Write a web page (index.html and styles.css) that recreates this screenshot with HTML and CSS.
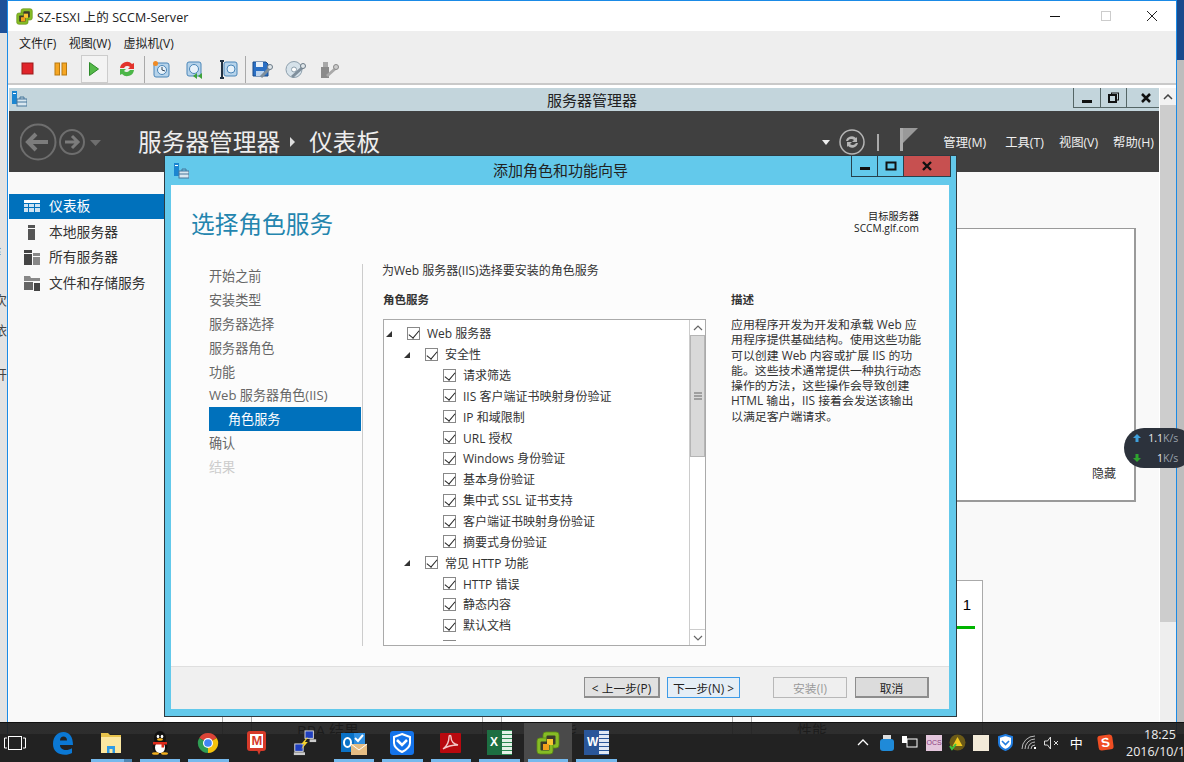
FILE: index.html
```html
<!DOCTYPE html>
<html lang="zh-CN">
<head>
<meta charset="utf-8">
<title>SZ-ESXI 上的 SCCM-Server</title>
<link rel="stylesheet" href="styles.css">
</head>
<body>
<svg class="defs" width="0" height="0">
  <symbol id="vs" viewBox="0 0 24 24">
    <rect x="7" y="1" width="16" height="16" rx="3" fill="#86bc25" stroke="#5c8a12" stroke-width=".8"/>
    <rect x="1" y="7" width="16" height="16" rx="3" fill="#86bc25" stroke="#5c8a12" stroke-width=".8"/>
    <rect x="10.500" y="4.500" width="9" height="9" rx="1" fill="#3b3b2a"/>
    <rect x="4.500" y="10.500" width="9" height="9" rx="1" fill="#3b3b2a"/>
    <rect x="11" y="8" width="6" height="6" fill="#f9c733"/><rect x="7" y="13" width="6" height="6" fill="#f2a01b"/>
  </symbol>
  <symbol id="sm" viewBox="0 0 16 16">
    <rect x="1" y="0" width="5" height="13" fill="#1c86d1"/><rect x="2" y="2" width="3" height="1" fill="#fff"/>
    <rect x="6" y="8" width="10" height="7" fill="#d9e7f0" stroke="#47769b"/><path d="M9 8V6h4v2" fill="none" stroke="#47769b"/><path d="M6 11h10" stroke="#47769b"/>
  </symbol>
</svg>
<div class="desktop">
  <div class="strip strip-left"><span class="blue"></span><span class="frag f1">纟</span><span class="frag f2">次</span><span class="frag f3">依</span><span class="frag">开</span></div>
  <div class="strip strip-right"><span class="blue"></span></div>

  <div class="vm">
    <div class="vm-title">
      <svg class="vm-logo" width="17" height="17"><use href="#vs"/></svg>
      <span class="vm-name">SZ-ESXI 上的 SCCM-Server</span>
      <div class="win-ctrl">
        <svg width="46" height="30" viewBox="0 0 46 30"><path d="M13 15.500h10" stroke="#111" stroke-width="1"/></svg>
        <svg width="46" height="30" viewBox="0 0 46 30"><rect x="18.500" y="10.500" width="9" height="9" fill="none" stroke="#ccc"/></svg>
        <svg width="46" height="30" viewBox="0 0 46 30"><path d="M18 10l10 10M28 10L18 20" stroke="#222" stroke-width="1"/></svg>
      </div>
    </div>
    <div class="vm-bar">
      <div class="vm-menu"><span>文件(F)</span><span>视图(W)</span><span>虚拟机(V)</span></div>
      <div class="toolbar">
        <div class="tool"><svg width="14" height="14"><rect x="1" y="1" width="11" height="11" fill="#e0242a" stroke="#9c1a1a"/></svg></div>
        <div class="tool"><svg width="14" height="14"><rect x="1" y="1" width="4.500" height="12" fill="#f6a623" stroke="#b97a10"/><rect x="8" y="1" width="4.500" height="12" fill="#f6a623" stroke="#b97a10"/></svg></div>
        <div class="tool tool-on"><svg width="12" height="16"><path d="M1.500 1.500L10.500 8l-9 6.500z" fill="#54b948" stroke="#2d8a2a"/></svg></div>
        <div class="tool"><svg width="18" height="18" viewBox="0 0 18 18"><path d="M2 8a7 7 0 0 1 12-4l2-1v6h-6l2-2a4 4 0 0 0-6 1z" fill="#e2332c"/><path d="M16 10a7 7 0 0 1-12 4l-2 1V9h6l-2 2a4 4 0 0 0 6-1z" fill="#4bb648"/></svg></div>
        <span class="tool-sep"></span>
        <div class="tool"><svg width="19" height="19" viewBox="0 0 19 19"><rect x="2" y="3" width="15" height="14" rx="2" fill="#b6d3ea" stroke="#4a86b8"/><circle cx="10" cy="10" r="4.500" fill="#e8f2fa" stroke="#4a86b8"/><path d="M10 7v3l3 1" fill="none" stroke="#345"/><circle cx="3.500" cy="3.500" r="2.500" fill="#f08a24"/></svg></div>
        <div class="tool"><svg width="19" height="19" viewBox="0 0 19 19"><rect x="2" y="2" width="14" height="14" rx="2" fill="#b6d3ea" stroke="#4a86b8"/><circle cx="9" cy="9" r="4.500" fill="#e8f2fa" stroke="#4a86b8"/><path d="M12 13l-4 3 4 3zM17 13l-4 3 4 3z" fill="#3ea33a"/></svg></div>
        <div class="tool"><svg width="19" height="19" viewBox="0 0 19 19"><rect x="5" y="2" width="13" height="14" rx="2" fill="#b6d3ea" stroke="#4a86b8"/><circle cx="12" cy="9" r="4" fill="#e8f2fa" stroke="#4a86b8"/><path d="M3 1v5M3 13v5M1 1h4M1 18h4M3 6v7" stroke="#234" stroke-width="2" fill="none"/></svg></div>
        <span class="tool-sep"></span>
        <div class="tool"><svg width="21" height="19" viewBox="0 0 21 19"><path d="M1 2h13l2 2v12H1z" fill="#2a6fc4" stroke="#174a8a"/><rect x="4" y="2" width="7" height="5" fill="#e8f0f8"/><rect x="4" y="11" width="8" height="5" fill="#bcd4ee"/><path d="M9 17l9-9" stroke="#7f8f9c" stroke-width="3"/><circle cx="18" cy="7" r="2.500" fill="#dfe6ea" stroke="#6c7a86"/></svg></div>
        <div class="tool"><svg width="21" height="19" viewBox="0 0 21 19"><circle cx="9" cy="9.500" r="8" fill="#d6e2ea" stroke="#8ea0ad"/><circle cx="9" cy="9.500" r="2.500" fill="#fff" stroke="#8ea0ad"/><path d="M7 17l11-10" stroke="#7f8f9c" stroke-width="3"/><circle cx="18" cy="6" r="2.500" fill="#dfe6ea" stroke="#6c7a86"/></svg></div>
        <div class="tool"><svg width="21" height="19" viewBox="0 0 21 19"><rect x="2" y="7" width="8" height="11" fill="#8a8a8a"/><rect x="4" y="2" width="5" height="5" fill="#a8a8a8"/><path d="M8 16l9-8" stroke="#a9a9a9" stroke-width="3"/><circle cx="17" cy="7" r="2.500" fill="#ccc" stroke="#888"/></svg></div>
      </div>
    </div>
    <div class="vm-screen">
      <div class="sm">
        <div class="sm-title">
          <svg class="sm-icon" width="16" height="16"><use href="#sm"/></svg>
          <span class="sm-name">服务器管理器</span>
          <div class="sm-ctrl">
            <span class="sm-btn sm-min"><svg width="12" height="12"><rect x="1" y="8" width="10" height="3" fill="#111"/></svg></span>
            <span class="sm-btn sm-res"><svg width="12" height="12"><rect x="3.500" y="1" width="7" height="7" fill="none" stroke="#111"/><rect x="1" y="3" width="7" height="7" fill="#c3d5dc" stroke="#111" stroke-width="2"/></svg></span>
            <span class="sm-btn sm-cls"><svg width="12" height="12"><path d="M2 2l8 8M10 2l-8 8" stroke="#111" stroke-width="2.500"/></svg></span>
          </div>
        </div>
        <div class="sm-head">
          <svg class="nav-arrows" width="90" height="40" viewBox="0 0 90 40">
            <circle cx="18" cy="20" r="17.500" fill="none" stroke="#6e6e6e" stroke-width="2"/>
            <path d="M8 20h20M16 12l-8 8 8 8" fill="none" stroke="#7c7c7c" stroke-width="4"/>
            <circle cx="52" cy="20" r="12" fill="none" stroke="#6e6e6e" stroke-width="2"/>
            <path d="M45 20h13M52 14l6 6-6 6" fill="none" stroke="#7c7c7c" stroke-width="3"/>
            <path d="M70 18h11l-5.500 6z" fill="#6e6e6e"/>
          </svg>
          <span class="crumb">服务器管理器</span>
          <svg class="crumb-sep" width="8" height="10"><path d="M1 0l5 5-5 5z" fill="#ddd"/></svg>
          <span class="crumb">仪表板</span>
          <div class="head-right">
            <svg width="8" height="5"><path d="M0 0h8L4 5z" fill="#eee"/></svg>
            <svg class="refresh" width="26" height="26" viewBox="0 0 26 26"><circle cx="13" cy="13" r="12" fill="none" stroke="#b5b5b5" stroke-width="1.500"/><path d="M7 12a6 6 0 0 1 10-3l1-1v5h-5l2-2a4 4 0 0 0-6 1zM19 14a6 6 0 0 1-10 3l-1 1v-5h5l-2 2a4 4 0 0 0 6-1z" fill="#b5b5b5"/></svg>
            <span class="head-sep"></span>
            <svg class="flag" width="18" height="24" viewBox="0 0 18 24"><rect x="0" y="1" width="3" height="23" fill="#aaa"/><path d="M3 1h15L3 16z" fill="#999"/></svg>
            <span class="head-menu">管理(M)</span><span class="head-menu h2">工具(T)</span><span class="head-menu h3">视图(V)</span><span class="head-menu h4">帮助(H)</span>
          </div>
        </div>
        <div class="sm-body">
          <div class="sm-nav">
            <div class="nav-item nav-on"><svg width="16" height="13" viewBox="0 0 16 13"><rect width="16" height="3" fill="#fff"/><path d="M0 4h4v3H0zM5 4h5v3H5zM11 4h5v3h-5zM0 8h4v4H0zM5 8h5v4H5zM11 8h5v4h-5z" fill="#cfe3f2"/></svg><span class="nav-text">仪表板</span></div>
            <div class="nav-item"><svg width="16" height="15" viewBox="0 0 16 15"><rect x="4" y="0" width="7" height="3" fill="#555"/><rect x="4" y="4" width="7" height="11" fill="#555"/></svg><span class="nav-text">本地服务器</span></div>
            <div class="nav-item"><svg width="16" height="15" viewBox="0 0 16 15"><rect x="0" y="0" width="8" height="3" fill="#444"/><rect x="0" y="4" width="8" height="11" fill="#444"/><rect x="9" y="3" width="7" height="3" fill="#888"/><rect x="9" y="7" width="7" height="8" fill="#888"/></svg><span class="nav-text">所有服务器</span></div>
            <div class="nav-item"><svg width="16" height="15" viewBox="0 0 16 15"><path d="M0 0h6l1 2h9v3H0z" fill="#888"/><rect x="0" y="6" width="9" height="8" fill="#666"/><path d="M10 7h6v8h-6z" fill="#444"/></svg><span class="nav-text">文件和存储服务</span></div>
          </div>
          <div class="sm-main">
            <div class="box"><span class="hide-link">隐藏</span></div>
            <div class="cards">
              <div class="card card-first"></div>
              <div class="card"><span class="card-label">BPA 结果</span></div>
              <div class="card"><span class="card-label">性能</span></div>
              <div class="card"><span class="card-num">1</span><span class="card-bar"></span><span class="card-label">性能</span></div>
            </div>
          </div>
        </div>
      </div>
      <div class="sm-scroll"><span class="sc-up"><svg width="10" height="6"><path d="M1 5l4-4 4 4" fill="none" stroke="#444" stroke-width="1.500"/></svg></span><span class="sc-thumb"></span></div>
    </div>
  </div>

  <div class="dialog">
    <div class="dlg-title">
      <svg width="16" height="16"><use href="#sm"/></svg>
      <span class="dlg-name">添加角色和功能向导</span>
      <div class="dlg-ctrl">
        <span class="dlg-btn dlg-min"><svg width="12" height="10"><rect x="1" y="6" width="10" height="3" fill="#111"/></svg></span>
        <span class="dlg-btn dlg-max"><svg width="12" height="10"><rect x="1.500" y="1.500" width="9" height="7" fill="none" stroke="#111" stroke-width="2"/></svg></span>
        <span class="dlg-btn dlg-cls"><svg width="12" height="10"><path d="M2 1l8 8M10 1L2 9" stroke="#111" stroke-width="2.400"/></svg></span>
      </div>
    </div>
    <div class="dlg-body">
      <div class="dlg-head">
        <h1>选择角色服务</h1>
        <div class="target"><span>目标服务器</span><span>SCCM.glf.com</span></div>
      </div>
      <div class="dlg-content">
        <div class="steps">
          <div class="step">开始之前</div>
          <div class="step">安装类型</div>
          <div class="step">服务器选择</div>
          <div class="step">服务器角色</div>
          <div class="step">功能</div>
          <div class="step">Web 服务器角色(IIS)</div>
          <div class="step step-on">角色服务</div>
          <div class="step">确认</div>
          <div class="step step-off">结果</div>
        </div>
        <div class="dlg-main">
          <p class="intro">为Web 服务器(IIS)选择要安装的角色服务</p>
          <div class="panes">
            <div class="pane-left">
              <div class="pane-label">角色服务</div>
              <div class="tree">
                <div class="tree-rows">
                  <div class="row d0"><i class="tw"></i><b class="cb"></b>Web 服务器</div>
                  <div class="row d1"><i class="tw"></i><b class="cb"></b>安全性</div>
                  <div class="row d2"><b class="cb"></b>请求筛选</div>
                  <div class="row d2"><b class="cb"></b>IIS 客户端证书映射身份验证</div>
                  <div class="row d2"><b class="cb"></b>IP 和域限制</div>
                  <div class="row d2"><b class="cb"></b>URL 授权</div>
                  <div class="row d2"><b class="cb"></b>Windows 身份验证</div>
                  <div class="row d2"><b class="cb"></b>基本身份验证</div>
                  <div class="row d2"><b class="cb"></b>集中式 SSL 证书支持</div>
                  <div class="row d2"><b class="cb"></b>客户端证书映射身份验证</div>
                  <div class="row d2"><b class="cb"></b>摘要式身份验证</div>
                  <div class="row d1"><i class="tw"></i><b class="cb"></b>常见 HTTP 功能</div>
                  <div class="row d2"><b class="cb"></b>HTTP 错误</div>
                  <div class="row d2"><b class="cb"></b>静态内容</div>
                  <div class="row d2"><b class="cb"></b>默认文档</div>
                  <div class="row d2"><b class="cb"></b></div>
                </div>
                <div class="tree-scroll">
                  <span class="ts-btn"><svg width="10" height="6"><path d="M1 5l4-4 4 4" fill="none" stroke="#666" stroke-width="1.200"/></svg></span>
                  <span class="ts-thumb"><svg width="8" height="8"><path d="M0 1h8M0 4h8M0 7h8" stroke="#666" stroke-width="1.200"/></svg></span>
                  <span class="ts-track"></span>
                  <span class="ts-btn ts-down"><svg width="10" height="6"><path d="M1 1l4 4 4-4" fill="none" stroke="#666" stroke-width="1.200"/></svg></span>
                </div>
              </div>
            </div>
            <div class="pane-right">
              <div class="pane-label">描述</div>
              <p class="desc">应用程序开发为开发和承载 Web 应<br>用程序提供基础结构。使用这些功能<br>可以创建 Web 内容或扩展 IIS 的功<br>能。这些技术通常提供一种执行动态<br>操作的方法，这些操作会导致创建<br>HTML 输出，IIS 接着会发送该输出<br>以满足客户端请求。</p>
            </div>
          </div>
        </div>
      </div>
      <div class="dlg-foot">
        <button class="btn b-prev">&lt; 上一步(P)</button>
        <button class="btn b-next">下一步(N) &gt;</button>
        <button class="btn b-dis">安装(I)</button>
        <button class="btn b-cancel">取消</button>
      </div>
    </div>
  </div>

  <div class="netspeed">
    <div class="net-row"><svg width="8" height="8"><path d="M4 0l4 4H5.500v4h-3V4H0z" fill="#3fa0dc"/></svg><span class="val">1.1</span><span class="unit">K/s</span></div>
    <div class="net-row"><svg width="8" height="8"><path d="M4 8l4-4H5.500V0h-3v4H0z" fill="#2ea52e"/></svg><span class="val">1</span><span class="unit">K/s</span></div>
  </div>

  <div class="taskbar">
    <div class="tv"><svg width="22" height="16" viewBox="0 0 22 16"><rect x="4.500" y="1.500" width="13" height="13" fill="none" stroke="#fff"/><path d="M3 3H.5v10H3M19 3h2.500v10H19" fill="none" stroke="#fff"/></svg></div>
    <div class="ti"><svg width="22" height="24" viewBox="0 0 22 24"><path d="M1 13C1 5 6 1 11.500 1 17.500 1 21 6 21 14H8c0 3.500 3 5 6 5 2 0 4-.6 6-1.800V22c-2 1.200-4.500 1.800-7 1.800C6 23.800 1 20 1 13zM8 9.500h7c0-2.500-1.500-4-3.500-4S8 7 8 9.500z" fill="#0b78d4"/></svg></div>
    <div class="ti open open-stack"><svg width="22" height="20" viewBox="0 0 22 20"><path d="M1 0h7l2 2h11v18H1z" fill="#e8c34c"/><path d="M1 4h20v16H1z" fill="#fbe7a1"/><path d="M7 20v-7h8v7h-2.500v-4h-3v4z" fill="#2f9be6"/></svg></div>
    <div class="ti open"><svg width="20" height="24" viewBox="0 0 20 24"><ellipse cx="10" cy="7.500" rx="6" ry="7.500" fill="#111"/><ellipse cx="10" cy="16" rx="7.500" ry="6.500" fill="#111"/><ellipse cx="10" cy="16.500" rx="5" ry="5.500" fill="#fff"/><ellipse cx="8" cy="5.500" rx="1.300" ry="1.800" fill="#fff"/><ellipse cx="12" cy="5.500" rx="1.300" ry="1.800" fill="#fff"/><ellipse cx="10" cy="8.500" rx="3" ry="1.200" fill="#f2b01e"/><path d="M3 11h14v2.500h-3v3h-2.500v-3H3z" fill="#dd2a1b"/><ellipse cx="5.500" cy="22.500" rx="3.500" ry="1.300" fill="#f2b01e"/><ellipse cx="14.500" cy="22.500" rx="3.500" ry="1.300" fill="#f2b01e"/></svg></div>
    <div class="ti open"><svg width="22" height="22" viewBox="0 0 24 24"><path d="M12 12L2.470 6.500A11 11 0 0 1 21.530 6.500z" fill="#db4437"/><path d="M12 12l9.530-5.500A11 11 0 0 1 12 23z" fill="#f4c20d"/><path d="M12 12v11A11 11 0 0 1 2.470 6.500z" fill="#2f9e54"/><circle cx="12" cy="12" r="5.500" fill="#fff"/><circle cx="12" cy="12" r="4.200" fill="#4285f4"/></svg></div>
    <div class="ti"><span class="ti-m">M</span></div>
    <div class="ti"><svg width="24" height="26" viewBox="0 0 24 28"><rect x="12" y="1" width="9" height="8" fill="#1f3fbf" stroke="#ddd"/><rect x="17" y="10" width="7" height="3" fill="#ccc"/><rect x="1" y="15" width="9" height="8" fill="#1f3fbf" stroke="#ddd"/><rect x="0" y="24" width="12" height="3" fill="#ccc"/><path d="M14 8l-6 7h3l-3 6 7-8h-3l3-5z" fill="#f6d32d"/></svg></div>
    <div class="ti open"><svg width="26" height="26" viewBox="0 0 26 26"><rect x="10" y="3" width="14" height="11" fill="#2f8fe0"/><path d="M14 8l3 3 5-6" fill="none" stroke="#fff" stroke-width="2"/><rect x="0" y="3" width="13" height="19" fill="#0a72c6"/><ellipse cx="6.500" cy="12.500" rx="3.500" ry="4.500" fill="none" stroke="#fff" stroke-width="2"/><rect x="10" y="14" width="16" height="11" fill="#e6bd83"/><path d="M10 14l8 6 8-6" fill="none" stroke="#fff"/></svg></div>
    <div class="ti open"><svg width="24" height="24" viewBox="0 0 24 24"><rect width="24" height="24" rx="3" fill="#1473ea"/><path d="M12 3l8 3v6c0 4-4 7-8 9-4-2-8-5-8-9V6z" fill="none" stroke="#fff" stroke-width="2"/><path d="M7 9l5 5 5-5" fill="none" stroke="#fff" stroke-width="2.500"/></svg></div>
    <div class="ti open"><svg width="21" height="20" viewBox="0 0 21 20"><rect width="21" height="20" rx="1" fill="#b8090f"/><path d="M3 16c4-3 6-7 6-12 0-2 2-2 2 0 0 5 3 7 7 8-4 0-9 0-15 4z" fill="none" stroke="#f3c6c6" stroke-width="1.400"/></svg></div>
    <div class="ti open"><span class="ti-doc ti-xl">X</span></div>
    <div class="ti open ti-active"><svg width="24" height="24"><use href="#vs"/></svg></div>
    <div class="ti open"><span class="ti-doc ti-wd">W</span></div>
    <div class="tray">
      <span class="tr"><svg width="12" height="7"><path d="M1 6l5-5 5 5" fill="none" stroke="#fff" stroke-width="1.300"/></svg></span>
      <span class="tr"><svg width="14" height="16" viewBox="0 0 14 16"><rect x="3" y="0" width="8" height="5" fill="#ddd"/><rect x="0" y="4" width="14" height="12" rx="3" fill="#1f8ad8"/></svg></span>
      <span class="tr"><svg width="16" height="13" viewBox="0 0 16 13"><rect x="5" y="3" width="10" height="8" fill="none" stroke="#fff"/><rect x="0" y="0" width="5" height="7" fill="#fff"/></svg></span>
      <span class="tr"><span class="tr-pink">OCS</span></span>
      <span class="tr"><svg width="17" height="17" viewBox="0 0 17 17"><circle cx="8.500" cy="8.500" r="8" fill="#6b5a17"/><path d="M8.500 3l5 9h-10z" fill="#f2c81e"/><path d="M1 12l2 3 4-5" fill="none" stroke="#3fc23f" stroke-width="2"/></svg></span>
      <span class="tr"><span class="tr-white"></span></span>
      <span class="tr"><svg width="15" height="17" viewBox="0 0 15 17"><path d="M7.500 1l6.500 2v6c0 3-3 6-6.500 7C4 15 1 12 1 9V3z" fill="#fff" stroke="#1f7ce0" stroke-width="2"/><path d="M4 7l3.500 3.500L11 7" fill="none" stroke="#1f7ce0" stroke-width="1.600"/></svg></span>
      <span class="tr"><svg width="16" height="15" viewBox="0 0 16 15"><path d="M1 14a13 13 0 0 1 13-13M4 14a10 10 0 0 1 10-10M7 14a7 7 0 0 1 7-7M10 14a4 4 0 0 1 4-4" fill="none" stroke="#bbb"/><rect x="13" y="12" width="2" height="2" fill="#fff"/></svg></span>
      <span class="tr"><svg width="16" height="14" viewBox="0 0 16 14"><path d="M.5 5h3l3-4v12l-3-4h-3z" fill="none" stroke="#ddd"/><path d="M10 5l4 4M14 5l-4 4" stroke="#ddd"/></svg></span>
      <span class="tr tr-ime">中</span>
      <span class="tr tr-wide"><span class="tr-sogou">S</span></span>
    </div>
    <div class="clock"><span class="time">18:25</span><span class="date">2016/10/19</span></div>
  </div>
</div>
</body>
</html>
```
FILE: styles.css
```css
* { box-sizing: border-box; }
html, body { margin: 0; padding: 0; }
body { width: 1184px; height: 762px; overflow: hidden; font-family: "Open Sans", "Noto Sans CJK SC", sans-serif; font-size: 12px; color: #333; }
.defs { position: absolute; }
svg { display: block; flex: none; }
.desktop { position: relative; width: 1184px; height: 762px; overflow: hidden; background: #e6e6e6; }

.strip { position: absolute; top: 0; width: 7px; height: 722px; overflow: hidden; display: flex; flex-direction: column; background: #e3e3e3; }
.strip-left { left: 0; }
.strip-right { left: 1177px; background: #bdbdbd; }
.strip .blue { display: block; flex: none; height: 33px; background: #1e5199; margin-bottom: 210px; }
.strip-right .blue { height: 60px; background: #1b4a8c; }
.frag { display: block; flex: none; width: 14px; height: 14px; margin-left: -6px; font-size: 13px; line-height: 14px; color: #444; }
.f1 { margin-bottom: 36px; }
.f2 { margin-bottom: 16px; }
.f3 { margin-bottom: 30px; }

.vm { position: absolute; left: 7px; top: 0; width: 1170px; height: 762px; background: #fff; border: solid #1a8ae6; border-width: 1px 1px 0 1px; display: flex; flex-direction: column; }
.vm-title { height: 30px; flex: none; display: flex; align-items: center; padding-left: 8px; background: #fff; }
.vm-logo { margin-right: 4px; }
.vm-name { font-size: 12.500px; color: #222; letter-spacing: .1px; }
.win-ctrl { margin-left: auto; display: flex; margin-right: 1px; }
.vm-bar { height: 54px; flex: none; background: #eee; border-bottom: 2px solid #c9c9c9; display: flex; flex-direction: column; }
.vm-menu { height: 24px; flex: none; display: flex; align-items: flex-end; padding: 0 0 2px 11px; color: #222; font-size: 12px; }
.vm-menu span { margin-right: 12.500px; line-height: 18px; }
.toolbar { display: flex; align-items: center; height: 28px; padding-left: 3px; }
.tool { width: 33.300px; height: 28px; display: flex; align-items: center; justify-content: center; }
.tool-on { background: #f3f3f3; box-shadow: inset 0 0 0 1px #ccc; width: 27px; margin: 0 3px; }
.tool-sep { width: 1px; height: 27px; background: #a9a9a9; }

.vm-screen { flex: 1; min-height: 0; margin-top: 3px; padding-left: 1px; display: flex; background: #fff; }
.sm { width: 1150px; margin-right: 1px; display: flex; flex-direction: column; }
.sm-title { position: relative; height: 23px; flex: none; background: #c3d5dc; display: flex; align-items: center; justify-content: center; }
.sm-icon { position: absolute; left: 2px; top: 3px; }
.sm-name { font-size: 15px; color: #222; margin-left: 16px; }
.sm-ctrl { position: absolute; right: 0; top: 0; display: flex; height: 20px; }
.sm-btn { display: flex; align-items: center; justify-content: center; height: 20px; border: solid #566; border-width: 0 1px 1px 1px; }
.sm-min { width: 28px; }
.sm-res { width: 26px; border-left: 0; }
.sm-cls { width: 32px; border-left: 0; border-right: 0; padding-left: 6px; }
.sm-head { height: 61px; flex: none; background: #404040; display: flex; align-items: center; padding-left: 11px; padding-bottom: 1px; color: #eee; }
.nav-arrows { margin-right: 28px; margin-top: 2px; }
.crumb { font-size: 23.700px; line-height: 28px; margin-top: 2px; }
.crumb-sep { margin: 2px 12px 0 9px; }
.head-right { margin-left: auto; display: flex; align-items: center; padding-top: 2px; }
.refresh { margin: 0 12px 0 9px; }
.head-sep { width: 2px; height: 17px; background: #aaa; margin-right: 21px; }
.flag { margin-right: 25px; margin-top: -6px; }
.head-menu { font-size: 12.300px; color: #f0f0f0; white-space: nowrap; }
.h2 { margin-left: 19px; }
.h3 { margin-left: 15px; }
.h4 { margin-left: 15px; margin-right: 5px; }
.sm-body { flex: 1; min-height: 0; display: flex; background: #f9f9f9; }
.sm-nav { width: 155px; flex: none; padding-top: 22px; }
.nav-item { height: 25.600px; display: flex; align-items: center; gap: 9px; padding-left: 15px; font-size: 13.800px; color: #333; }
.nav-text { margin-top: -3px; }
.nav-on { background: #0071bc; color: #fff; height: 25px; margin-bottom: .4px; }
.sm-main { flex: 1; min-width: 0; overflow: hidden; padding-top: 56px; display: flex; flex-direction: column; }
.box { flex: none; height: 274px; margin: 0 23px 0 40px; background: #fff; border: 2px solid #9a9a9a; border-width: 1px 2px 2px 1px; position: relative; display: flex; align-items: flex-end; justify-content: flex-end; padding: 0 18px 18px 0; }
.hide-link { font-size: 12px; color: #333; }
.cards { flex: none; height: 154px; margin-top: 78px; padding-right: 176px; display: flex; justify-content: flex-end; gap: 18px; }
.card { flex: none; width: 232px; background: #fff; border: solid #aaa; border-width: 1px 1px 0 1px; display: flex; flex-direction: column; padding-left: 45px; font-size: 15px; color: #000; }
.card-first { margin-right: 10px; }
.card-num { align-self: flex-end; margin: 14px 11px 0 0; line-height: 20px; font-size: 15px; font-family: "Liberation Sans", sans-serif; }
.card-bar { display: block; height: 3px; background: #00b400; margin: 11px 7px 0 -45px; }
.card-label { margin-top: auto; margin-bottom: -6px; line-height: 20px; white-space: nowrap; }
.sm-scroll { width: 16px; flex: none; display: flex; flex-direction: column; background: #eee; }
.sc-up { height: 17px; display: flex; align-items: center; justify-content: center; background: #f2f2f2; }
.sc-thumb { height: 517px; background: #cdcdcd; }

.dialog { position: absolute; left: 164px; top: 155px; width: 793px; height: 562px; background: #63c9eb; border: 1px solid #2e3a40; display: flex; flex-direction: column; }
.dlg-title { position: relative; height: 29px; flex: none; padding-left: 8px; display: flex; align-items: center; }
.dlg-name { position: absolute; left: 0; right: 0; text-align: center; font-size: 15px; color: #222; top: 4px; line-height: 20px; }
.dlg-ctrl { position: absolute; right: 5px; top: 0; display: flex; height: 21px; border: solid #26414d; border-width: 0 1px 1px 1px; }
.dlg-btn { height: 20px; display: flex; align-items: center; justify-content: center; }
.dlg-min { width: 26px; border-right: 1px solid #26414d; }
.dlg-max { width: 26px; border-right: 1px solid #26414d; }
.dlg-cls { width: 46px; background: #c75050; }
.dlg-body { flex: 1; min-height: 0; margin: 0 7px 7px 6px; background: #fcfcfc; display: flex; flex-direction: column; }
.dlg-head { height: 79px; flex: none; display: flex; justify-content: space-between; padding: 23px 30px 0 20px; }
.dlg-head h1 { margin: 0; font-size: 23.700px; font-weight: 400; line-height: 32px; color: #2485ae; }
.target { display: flex; flex-direction: column; align-items: flex-end; font-size: 10.200px; line-height: 12px; padding-top: 2px; color: #222; }
.dlg-content { flex: 1; min-height: 0; display: flex; }
.steps { width: 192px; flex: none; padding-left: 38px; border-right: 1px solid #ccc; height: 382px; }
.step { height: 23.900px; line-height: 25.900px; font-size: 13.100px; color: #666; white-space: nowrap; }
.step-on { background: #0071bc; color: #fff; padding-left: 19px; margin-right: 1px; }
.step-off { color: #ccc; }
.dlg-main { flex: 1; min-width: 0; padding-left: 20px; }
.intro { margin: 0 0 0 -1px; line-height: 13px; font-size: 12px; color: #333; white-space: nowrap; }
.panes { display: flex; gap: 25px; }
.pane-left { width: 323px; flex: none; }
.pane-right { width: 195px; flex: none; }
.pane-label { margin-top: 16px; font-weight: 700; line-height: 14px; font-size: 11.500px; color: #333; }
.tree { margin-top: 12px; height: 327px; border: 1px solid #aaa; background: #fff; display: flex; overflow: hidden; align-items: flex-start; }
.tree-rows { flex: 1; min-width: 0; height: 321px; padding-top: 3px; overflow: hidden; }
.row { position: relative; height: 20.850px; display: flex; align-items: center; font-size: 12px; color: #333; white-space: nowrap; }
.d0 { padding-left: 23px; }
.d1 { padding-left: 41px; }
.d2 { padding-left: 59px; }
.cb { position: relative; flex: none; width: 13px; height: 13px; margin-right: 7px; border: 1px solid #888; background: #fff; }
.cb::after { content: ""; position: absolute; left: 3px; top: 0; width: 5px; height: 9px; border: solid #222; border-width: 0 1.600px 1.600px 0; transform: rotate(40deg); }
.tw { position: absolute; width: 0; height: 0; margin-left: -21px; top: 8px; border-style: solid; border-width: 0 0 6px 6px; border-color: transparent transparent #333 transparent; }
.tree-scroll { width: 16px; height: 325px; flex: none; border-left: 1px solid #ccc; display: flex; flex-direction: column; background: #fff; }
.ts-btn { height: 15px; flex: none; display: flex; align-items: center; justify-content: center; }
.ts-down { border-top: 1px solid #ccc; height: 16px; }
.ts-thumb { height: 122px; flex: none; background: #d9d9d9; border: 1px solid #b5b5b5; display: flex; align-items: center; justify-content: center; }
.ts-track { flex: 1; }
.desc { margin: 10px 0 0; font-size: 11.900px; line-height: 15.300px; color: #333; white-space: nowrap; }
.dlg-foot { height: 43px; flex: none; background: #f0f0f0; border-top: 1px solid #dfdfdf; display: flex; align-items: flex-start; padding: 10px 0 0 413px; }
.btn { height: 21px; font: 11.800px/17px "Open Sans", "Noto Sans CJK SC", sans-serif; color: #222; background: #e1e1e1; border: 1px solid #8d8d8d; padding: 2px 0 0; white-space: nowrap; }
.b-prev { width: 76px; border-width: 1px 2px 2px 1px; }
.b-next { width: 73px; margin-left: 7px; border: 1px solid #3d9be8; background: #e5eef6; }
.b-dis { width: 74px; margin-left: 33px; color: #999; background: #efefef; border: 1px solid #b8b8b8; }
.b-cancel { width: 74px; margin-left: 8px; background: #dcdcdc; border-width: 1px 2px 2px 1px; }

.netspeed { position: absolute; left: 1124px; top: 428px; width: 70px; height: 40px; background: #2c323c; border-radius: 20px; padding: 0 0 0 9px; }
.net-row { display: flex; align-items: center; height: 20px; color: #eee; font-size: 10.500px; }
.val { width: 21px; text-align: right; margin-left: 1px; font-family: "Open Sans", sans-serif; }
.unit { color: #9aa2ad; }

.taskbar { position: absolute; left: 0; top: 722px; width: 1184px; height: 40px; background: linear-gradient(rgba(30,30,30,.93) 11px, #222 11px); border-top: 1px solid #111; display: flex; align-items: center; }
.tv { width: 38.700px; flex: none; display: flex; justify-content: center; padding: 0 9px 0 0; margin-top: 1px; }
.ti { position: relative; width: 48.500px; height: 39px; flex: none; display: flex; align-items: center; justify-content: center; }
.ti.open::after { content: ""; position: absolute; left: 4px; right: 4px; bottom: 0; height: 3px; background: #76b9ed; }
.open-stack::before { content: ""; position: absolute; right: 4px; bottom: 0; width: 8px; height: 3px; background: #4f86b3; z-index: 1; }
.ti-active { background: #4a4a4a; }
.ti-m { position: relative; width: 19px; height: 20px; margin-top: -3px; background: #fff; border: 3px solid #d63a2a; border-radius: 3px; color: #d63a2a; font: 700 13px/14px "Liberation Sans", sans-serif; text-align: center; }
.ti-m::after { content: ""; position: absolute; left: 7px; bottom: -7px; width: 0; height: 0; border: solid transparent; border-width: 5px 2px 0 2px; border-top-color: #d63a2a; }
.ti-doc { width: 25px; height: 25px; color: #fff; font: 700 12px/25px "Liberation Sans", sans-serif; padding-left: 3px; }
.ti-xl { background: linear-gradient(90deg, #1d6f42 60%, transparent 60%), repeating-linear-gradient(0deg, #2b8a52 0 1px, #e4f1e8 1px 4px); }
.ti-wd { background: linear-gradient(90deg, #2a5699 60%, transparent 60%), repeating-linear-gradient(0deg, #2a5699 0 1px, #e0e8f4 1px 4px); }
.tray { margin-left: auto; display: flex; align-items: center; height: 39px; padding-right: 4px; }
.tr { width: 23.700px; display: flex; justify-content: center; align-items: center; color: #fff; }
.tr-wide { width: 34px; }
.tr-pink { display: block; width: 16px; height: 16px; background: #e3c6dc; color: #8a3d80; font: 7px/16px "Liberation Sans", sans-serif; text-align: center; }
.tr-white { display: block; width: 16px; height: 16px; background: #f2ead8; }
.tr-ime { font-size: 13px; }
.tr-sogou { display: block; width: 15px; height: 15px; background: #f04e23; color: #fff; border-radius: 3px; font: 700 13px/15px "Liberation Sans", sans-serif; text-align: center; transform: rotate(-8deg); }
.clock { width: 58px; flex: none; overflow: hidden; color: #eee; font-size: 12.500px; line-height: 17px; display: flex; flex-direction: column; white-space: nowrap; }
.time { padding-left: 18px; }
```
